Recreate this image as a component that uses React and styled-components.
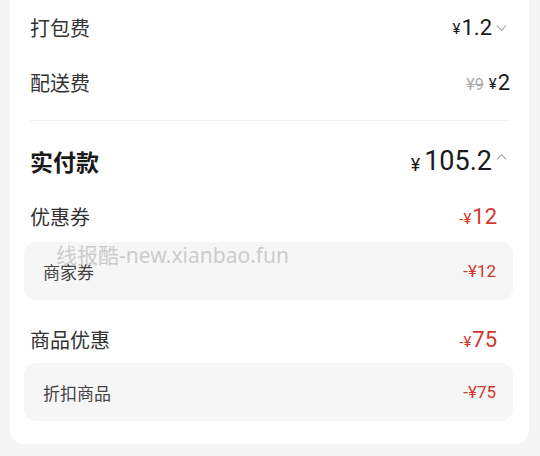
import React from "react";
import styled, { createGlobalStyle } from "styled-components";

const GlobalStyle = createGlobalStyle`
  body {
    margin: 0;
    background: #f5f5f5;
    font-family: Roboto, "Noto Sans CJK SC", sans-serif;
  }
`;

const Chevron = ({ up }) => (
  <ChevronIcon viewBox="0 0 12 8" $up={up}>
    <path d="M1 1.5 L6 6.5 L11 1.5" fill="none" stroke="#a0a0a0" strokeWidth="1.2" />
  </ChevronIcon>
);

const App = () => {
  return (
    <>
      <GlobalStyle />
      <Card>
        <Row $h={55}>
          <Label>打包费</Label>
          <Amount>
            <Yen>¥</Yen>
            <Num>1.2</Num>
            <Chevron />
          </Amount>
        </Row>
        <Row $h={55}>
          <Label>配送费</Label>
          <Amount>
            <Struck>¥9</Struck>
            <Yen>¥</Yen>
            <Num>2</Num>
          </Amount>
        </Row>
        <Divider />
        <Row $h={60}>
          <TotalLabel>实付款</TotalLabel>
          <Amount>
            <Yen $big>¥</Yen>
            <Num $big>105.2</Num>
            <Chevron up />
          </Amount>
        </Row>
        <Row $h={51} $inset>
          <Label>优惠券</Label>
          <Discount>
            <small>-¥</small>12
          </Discount>
        </Row>
        <SubBox $gap={16}>
          <SubLabel>商家券</SubLabel>
          <SubDiscount>-¥12</SubDiscount>
        </SubBox>
        <Row $h={47} $inset>
          <Label>商品优惠</Label>
          <Discount>
            <small>-¥</small>75
          </Discount>
        </Row>
        <SubBox>
          <SubLabel>折扣商品</SubLabel>
          <SubDiscount>-¥75</SubDiscount>
        </SubBox>
        <Watermark>线报酷-new.xianbao.fun</Watermark>
      </Card>
    </>
  );
};

export default App;

const Card = styled.div`
  position: relative;
  margin: 0 11px 0 10px;
  padding: 0 19px 23px 20px;
  background: #fff;
  border-radius: 0 0 14px 14px;
  display: flex;
  flex-direction: column;
`;

const Row = styled.div`
  height: ${(p) => p.$h}px;
  display: flex;
  align-items: center;
  justify-content: space-between;
  padding-right: ${(p) => (p.$inset ? 13 : 0)}px;
`;

const Label = styled.span`
  font-size: 20px;
  color: #333;
`;

const TotalLabel = styled.span`
  font-size: 23px;
  font-weight: 600;
  color: #1a1a1a;
`;

const Amount = styled.div`
  display: flex;
  align-items: center;
  color: #1a1a1a;
`;

const Yen = styled.span`
  font-size: ${(p) => (p.$big ? 18 : 15)}px;
  margin-right: ${(p) => (p.$big ? 4 : 1)}px;
  margin-top: ${(p) => (p.$big ? 6 : 3)}px;
`;

const Num = styled.span`
  font-size: ${(p) => (p.$big ? 27 : 22)}px;
`;

const Struck = styled.span`
  font-size: 16px;
  color: #a8a8a8;
  text-decoration: line-through;
  margin-right: 5px;
  margin-top: 3px;
`;

const ChevronIcon = styled.svg`
  width: 11px;
  height: 8px;
  margin: 0 3px 0 4px;
  transform: ${(p) => (p.$up ? "rotate(180deg) translateY(4px)" : "none")};
`;

const Divider = styled.div`
  height: 1px;
  background: #f0f0f0;
  margin: 10px 0;
`;

const Discount = styled.span`
  font-size: 22px;
  color: #d2372c;

  small {
    font-size: 15px;
    margin-right: 1px;
  }
`;

const SubBox = styled.div`
  height: 58px;
  margin: 0 -3px ${(p) => p.$gap || 0}px -6px;
  padding: 0 17px 0 19px;
  background: #f6f6f6;
  border-radius: 12px;
  display: flex;
  align-items: center;
  justify-content: space-between;
`;

const SubLabel = styled.span`
  font-size: 17px;
  color: #444;
`;

const SubDiscount = styled.span`
  font-size: 17px;
  color: #d2372c;
`;

const Watermark = styled.div`
  position: absolute;
  left: 46px;
  top: 241px;
  font-family: "Noto Sans", "Noto Sans CJK SC", sans-serif;
  font-size: 21px;
  line-height: 28px;
  color: rgba(185, 185, 185, 0.7);
  pointer-events: none;
  white-space: nowrap;
`;
